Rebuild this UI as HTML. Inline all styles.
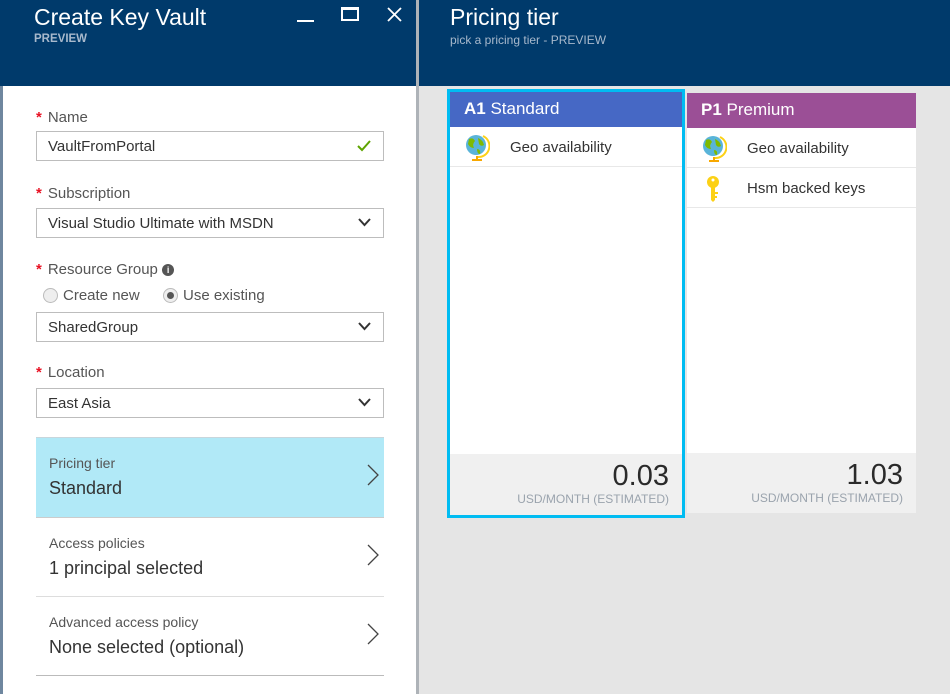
<!DOCTYPE html>
<html><head><meta charset="utf-8"><style>
*{box-sizing:border-box;margin:0;padding:0}
body{width:950px;height:694px;overflow:hidden;font-family:"Liberation Sans",sans-serif;background:#e5e5e5;position:relative;color:#333}
.abs{position:absolute}
.hdr{background:#003a6b;height:86px;top:0}
.t{color:#fff;font-size:23px;top:4px}
.st{color:#a8b9cc;font-size:11.5px;font-weight:bold;top:33px}
.lbl{font-size:15px;color:#555;left:36px}
.lbl b{color:#e81123;font-weight:bold;margin-right:6px}
.inp{left:36px;width:348px;height:30px;border:1px solid #bdbdbd;background:#fff;font-size:15px;color:#333;padding:6px 0 0 11px}
.chev{position:absolute;right:12px;top:9px}
.item{left:36px;width:348px;height:80px}
.item .a{position:absolute;left:13px;top:17px;font-size:14px;color:#555}
.item .b{position:absolute;left:13px;top:40px;font-size:18px;color:#333}
.item svg{position:absolute;right:5px;top:26px}
.card{background:#fff}
.ch{height:35px;color:#fff;font-size:17px;padding:7px 0 0 14px}
.row{height:40px;border-bottom:1px solid #e8e8e8;position:relative;font-size:15px}
.row span{position:absolute;left:60px;top:12px;color:#333}
.row svg{position:absolute;left:14px;top:7px}
.ft{background:#f0f0f0;position:absolute;left:0;right:0;bottom:0;height:60px;text-align:right;padding-right:13px}
.ft .p{font-size:29px;color:#2a2a2a;margin-top:6px;line-height:32px}
.ft .u{font-size:12px;color:#9aa3ad}
</style></head><body>
<div class="abs" style="left:0;top:0;width:417px;height:694px;background:#fff;border-left:3px solid #6f879f"></div>
<div class="abs" style="left:416px;top:0;width:3px;height:694px;background:#aeb3b8"></div>
<div class="abs hdr" style="left:0;width:416px"></div>
<div class="abs hdr" style="left:419px;width:531px"></div>
<div class="abs t" style="left:34px">Create Key Vault</div>
<div class="abs st" style="left:34px">PREVIEW</div>
<div class="abs" style="left:297px;top:20px;width:17px;height:2px;background:#fff"></div>
<div class="abs" style="left:341px;top:7px;width:18px;height:14px;border:2px solid #fff;border-top-width:3px"></div>
<svg class="abs" style="left:387px;top:7px" width="15" height="15"><path d="M1 1L14 14M14 1L1 14" stroke="#fff" stroke-width="1.8"/></svg>
<div class="abs t" style="left:450px">Pricing tier</div>
<div class="abs st" style="left:450px;font-size:12px;font-weight:normal;color:#a8b9cc">pick a pricing tier - PREVIEW</div>

<div class="abs lbl" style="top:109px"><b>*</b>Name</div>
<div class="abs inp" style="top:131px">VaultFromPortal<svg class="chev" width="14" height="12" style="top:8px"><path d="M1 6L5 10L13 1" stroke="#5ea400" stroke-width="2" fill="none"/></svg></div>
<div class="abs lbl" style="top:185px"><b>*</b>Subscription</div>
<div class="abs inp" style="top:208px">Visual Studio Ultimate with MSDN<svg class="chev" width="13" height="9"><path d="M1 1L6.5 7L12 1" stroke="#333" stroke-width="2" fill="none"/></svg></div>
<div class="abs lbl" style="top:261px"><b>*</b>Resource Group <span style="display:inline-block;width:12px;height:12px;border-radius:6px;background:#555;color:#fff;font-size:9px;text-align:center;line-height:12px;font-weight:bold;vertical-align:1px">i</span></div>
<div class="abs" style="left:43px;top:288px;width:15px;height:15px;border-radius:50%;border:1px solid #bbb;background:#eee"></div>
<div class="abs" style="left:63px;top:287px;font-size:15px;color:#555">Create new</div>
<div class="abs" style="left:163px;top:288px;width:15px;height:15px;border-radius:50%;border:1px solid #bbb;background:#eee"><div style="width:7px;height:7px;border-radius:50%;background:#555;margin:3px"></div></div>
<div class="abs" style="left:183px;top:287px;font-size:15px;color:#555">Use existing</div>
<div class="abs inp" style="top:312px">SharedGroup<svg class="chev" width="13" height="9"><path d="M1 1L6.5 7L12 1" stroke="#333" stroke-width="2" fill="none"/></svg></div>
<div class="abs lbl" style="top:364px"><b>*</b>Location</div>
<div class="abs inp" style="top:388px">East Asia<svg class="chev" width="13" height="9"><path d="M1 1L6.5 7L12 1" stroke="#333" stroke-width="2" fill="none"/></svg></div>

<div class="abs item" style="top:437px;background:#b1e9f7;border-top:1px solid #c8d6dc"><div class="a">Pricing tier</div><div class="b">Standard</div><svg width="12" height="22"><path d="M1 1L11 11L1 21" stroke="#444" stroke-width="1.3" fill="none"/></svg></div>
<div class="abs item" style="top:517px;border-top:1px solid #ccc"><div class="a">Access policies</div><div class="b">1 principal selected</div><svg width="12" height="22"><path d="M1 1L11 11L1 21" stroke="#444" stroke-width="1.3" fill="none"/></svg></div>
<div class="abs item" style="top:596px;border-top:1px solid #ddd;border-bottom:1px solid #bbb;height:80px"><div class="a">Advanced access policy</div><div class="b">None selected (optional)</div><svg width="12" height="22"><path d="M1 1L11 11L1 21" stroke="#444" stroke-width="1.3" fill="none"/></svg></div>

<div class="abs" style="left:447px;top:89px;width:238px;height:429px;border:3px solid #00bcf2;background:#fff">
<div class="ch" style="background:#4668c5"><b>A1</b> Standard</div>
<div class="row"><svg width="26" height="28"><circle cx="12" cy="11" r="10" fill="#59b4d9"/><path d="M5 5Q9 3 11 7Q8 10 10 14Q6 14 4 10Z M14 4Q19 6 20 11Q17 13 15 10Z M13 15Q17 15 16 20Q13 20 13 15Z" fill="#7fba00"/><path d="M19 2A11 11 0 0 1 14 23" stroke="#fcd116" stroke-width="2" fill="none"/><path d="M13 22V25M8 26H18" stroke="#f8a800" stroke-width="2"/></svg><span>Geo availability</span></div>
<div class="ft" style="height:61px"><div class="p">0.03</div><div class="u">USD/MONTH (ESTIMATED)</div></div>
</div>
<div class="abs card" style="left:687px;top:93px;width:229px;height:420px">
<div class="ch" style="background:#9b4f96"><b>P1</b> Premium</div>
<div class="row"><svg width="26" height="28"><circle cx="12" cy="11" r="10" fill="#59b4d9"/><path d="M5 5Q9 3 11 7Q8 10 10 14Q6 14 4 10Z M14 4Q19 6 20 11Q17 13 15 10Z M13 15Q17 15 16 20Q13 20 13 15Z" fill="#7fba00"/><path d="M19 2A11 11 0 0 1 14 23" stroke="#fcd116" stroke-width="2" fill="none"/><path d="M13 22V25M8 26H18" stroke="#f8a800" stroke-width="2"/></svg><span>Geo availability</span></div>
<div class="row"><svg width="26" height="28"><circle cx="12" cy="7" r="6" fill="#fcd116"/><circle cx="12" cy="5" r="1.5" fill="#fff"/><path d="M10 12H14V25L12 27L10 25Z M14 17H17V19H14Z M14 21H16V23H14Z" fill="#fcd116"/></svg><span>Hsm backed keys</span></div>
<div class="ft"><div class="p">1.03</div><div class="u">USD/MONTH (ESTIMATED)</div></div>
</div>
</body></html>
